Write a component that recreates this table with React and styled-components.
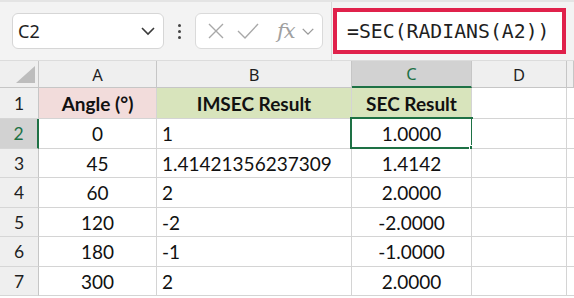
import styled, { createGlobalStyle, css } from 'styled-components';

const GlobalStyle = createGlobalStyle`
  html, body {
    margin: 0;
    padding: 0;
    background: #ffffff;
  }
  body {
    width: 574px;
    height: 298px;
    overflow: hidden;
  }
`;

const GREEN = '#1e7145';

const columns = [
  { key: 'A', width: 118 },
  { key: 'B', width: 195 },
  { key: 'C', width: 120, selected: true },
  { key: 'D', width: 95 },
];

const rows = [
  { n: 1, h: 31, cells: ['Angle (°)', 'IMSEC Result', 'SEC Result'], head: true },
  { n: 2, h: 30, cells: ['0', '1', '1.0000'], selected: true },
  { n: 3, h: 29, cells: ['45', '1.41421356237309', '1.4142'] },
  { n: 4, h: 30, cells: ['60', '2', '2.0000'] },
  { n: 5, h: 29, cells: ['120', '-2', '-2.0000'] },
  { n: 6, h: 30, cells: ['180', '-1', '-1.0000'] },
  { n: 7, h: 29, cells: ['300', '2', '2.0000'] },
];

const headFill = ['#f2dcdb', '#d8e4bc', '#d8e4bc'];

const App = () => {
  return (
    <>
      <GlobalStyle />
      <Page>
        <Toolbar>
          <NameBox>
            <NameText>C2</NameText>
            <Chevron width="16" height="10" viewBox="0 0 16 10">
              <path d="M2 2 L8 8 L14 2" />
            </Chevron>
          </NameBox>
          <Dots>
            <span />
            <span />
            <span />
          </Dots>
          <FuncBox>
            <IconSvg width="18" height="18" viewBox="0 0 18 18">
              <path d="M2 2 L16 16 M16 2 L2 16" />
            </IconSvg>
            <IconSvg width="24" height="18" viewBox="0 0 24 18">
              <path d="M2 9 L9 16 L22 2" />
            </IconSvg>
            <Fx>fx</Fx>
            <Chevron width="14" height="9" viewBox="0 0 16 10">
              <path d="M2 2 L8 8 L14 2" />
            </Chevron>
          </FuncBox>
          <FormulaArea>
            <FormulaBox>=SEC(RADIANS(A2))</FormulaBox>
          </FormulaArea>
        </Toolbar>

        <Sheet>
          <HeaderRow>
            <Corner>
              <Triangle />
            </Corner>
            {columns.map((c) => (
              <ColHead key={c.key} $w={c.width} $selected={c.selected}>
                {c.key}
              </ColHead>
            ))}
            <ColHead $w={7} />
          </HeaderRow>

          {rows.map((r) => (
            <Row key={r.n} $h={r.h}>
              <RowHead $selected={r.selected}>{r.n}</RowHead>
              <Cell $w={118} $align="center" $bold={r.head} $fill={r.head ? headFill[0] : null}>
                {r.cells[0]}
              </Cell>
              <Cell $w={195} $align={r.head ? 'center' : 'left'} $bold={r.head} $fill={r.head ? headFill[1] : null}>
                {r.cells[1]}
              </Cell>
              <Cell $w={120} $align="center" $bold={r.head} $fill={r.head ? headFill[2] : null} $active={r.selected}>
                {r.cells[2]}
              </Cell>
              <Cell $w={95} />
              <Cell $w={7} />
            </Row>
          ))}
        </Sheet>
      </Page>
    </>
  );
};

const Page = styled.div`
  width: 574px;
  height: 298px;
  overflow: hidden;
  background: #ffffff;
`;

const Toolbar = styled.div`
  height: 61px;
  box-sizing: border-box;
  background: #f3f3f3;
  border-top: 2px solid #e4e4e4;
  border-bottom: 1px solid #dcdcdc;
  display: flex;
  align-items: flex-start;
  padding-left: 12px;
`;

const NameBox = styled.div`
  margin-top: 11px;
  width: 152px;
  height: 36px;
  box-sizing: border-box;
  background: #ffffff;
  border: 1px solid #d6d6d6;
  border-radius: 6px;
  display: flex;
  align-items: center;
  justify-content: space-between;
  padding: 0 7px 0 5px;
`;

const NameText = styled.span`
  font-family: 'Noto Sans', sans-serif;
  font-size: 18px;
  color: #1f1f1f;
`;

const Chevron = styled.svg`
  fill: none;
  stroke: ${(p) => (p.width === '16' ? '#3a3a3a' : '#9a9a9a')};
  stroke-width: 1.6;
  flex-shrink: 0;
`;

const Dots = styled.div`
  width: 31px;
  height: 36px;
  margin-top: 11px;
  display: flex;
  flex-direction: column;
  align-items: center;
  justify-content: center;
  gap: 3px;

  span {
    width: 3px;
    height: 3px;
    border-radius: 50%;
    background: #444444;
  }
`;

const FuncBox = styled.div`
  margin-top: 11px;
  width: 128px;
  height: 36px;
  box-sizing: border-box;
  background: #ffffff;
  border: 1px solid #dadada;
  border-radius: 6px;
  display: flex;
  align-items: center;
  padding-left: 11px;
  gap: 11px;
`;

const IconSvg = styled.svg`
  fill: none;
  stroke: #a8a8a8;
  stroke-width: 1.4;
  flex-shrink: 0;
`;

const Fx = styled.span`
  font-family: 'DejaVu Serif', 'Liberation Serif', serif;
  font-style: italic;
  font-size: 21px;
  color: #a0a0a0;
  margin-left: 6px;
  margin-right: -5px;
  letter-spacing: -1px;
  line-height: 1;
`;

const FormulaArea = styled.div`
  margin-left: 8px;
  height: 60px;
  flex: 1;
  border-left: 1px solid #d8d8d8;
  padding-left: 1px;
  padding-top: 6px;
  box-sizing: border-box;
`;

const FormulaBox = styled.div`
  width: 233px;
  height: 46px;
  box-sizing: border-box;
  border: 4px solid #e0214b;
  background: #ffffff;
  display: flex;
  align-items: center;
  padding-left: 10px;
  font-family: 'DejaVu Sans Mono', 'Liberation Mono', monospace;
  font-size: 19.8px;
  color: #1f1f1f;
`;

const Sheet = styled.div`
  display: flex;
  flex-direction: column;
`;

const HeaderRow = styled.div`
  display: flex;
  height: 27px;
`;

const Corner = styled.div`
  width: 39px;
  box-sizing: border-box;
  background: #efefef;
  border-right: 1px solid #c6c6c6;
  border-bottom: 1px solid #c6c6c6;
  display: flex;
  align-items: flex-end;
  justify-content: flex-end;
  padding: 0 3px 4px 0;
`;

const Triangle = styled.div`
  width: 0;
  height: 0;
  border-left: 19px solid transparent;
  border-bottom: 17px solid #bdbdbd;
`;

const ColHead = styled.div`
  width: ${(p) => p.$w}px;
  flex-shrink: 0;
  box-sizing: border-box;
  background: #efefef;
  border-right: 1px solid #c6c6c6;
  border-bottom: 1px solid #c6c6c6;
  display: flex;
  align-items: center;
  justify-content: center;
  font-family: 'Noto Sans', sans-serif;
  font-size: 16.5px;
  color: #1f1f1f;
  ${(p) =>
    p.$selected &&
    css`
      background: #d2d2d2;
      color: ${GREEN};
      border-bottom: 2px solid ${GREEN};
    `}
`;

const Row = styled.div`
  display: flex;
  height: ${(p) => p.$h}px;
`;

const RowHead = styled.div`
  width: 39px;
  flex-shrink: 0;
  box-sizing: border-box;
  background: #efefef;
  border-right: 1px solid #c6c6c6;
  border-bottom: 1px solid #d6d6d6;
  display: flex;
  align-items: center;
  justify-content: center;
  font-family: 'Lato', sans-serif;
  font-size: 17.5px;
  color: #1f1f1f;
  ${(p) =>
    p.$selected &&
    css`
      background: #d2d2d2;
      color: ${GREEN};
      border-right: 2px solid ${GREEN};
    `}
`;

const Cell = styled.div`
  position: relative;
  width: ${(p) => p.$w}px;
  flex-shrink: 0;
  box-sizing: border-box;
  background: ${(p) => p.$fill || '#ffffff'};
  border-right: 1px solid #d4d4d4;
  border-bottom: 1px solid #d4d4d4;
  display: flex;
  align-items: center;
  justify-content: ${(p) => (p.$align === 'left' ? 'flex-start' : 'center')};
  padding: 0 5px;
  font-family: 'Lato', sans-serif;
  font-size: 19px;
  font-weight: ${(p) => (p.$bold ? 700 : 400)};
  color: #111111;
  white-space: nowrap;
  ${(p) =>
    p.$active &&
    css`
      &::before {
        content: '';
        position: absolute;
        left: -2px;
        top: -2px;
        right: -2px;
        bottom: -1px;
        border: 2px solid ${GREEN};
        pointer-events: none;
      }
      &::after {
        content: '';
        position: absolute;
        right: -5px;
        bottom: -4px;
        width: 7px;
        height: 7px;
        background: ${GREEN};
        border: 1px solid #ffffff;
        box-sizing: border-box;
      }
    `}
`;

export default App;
